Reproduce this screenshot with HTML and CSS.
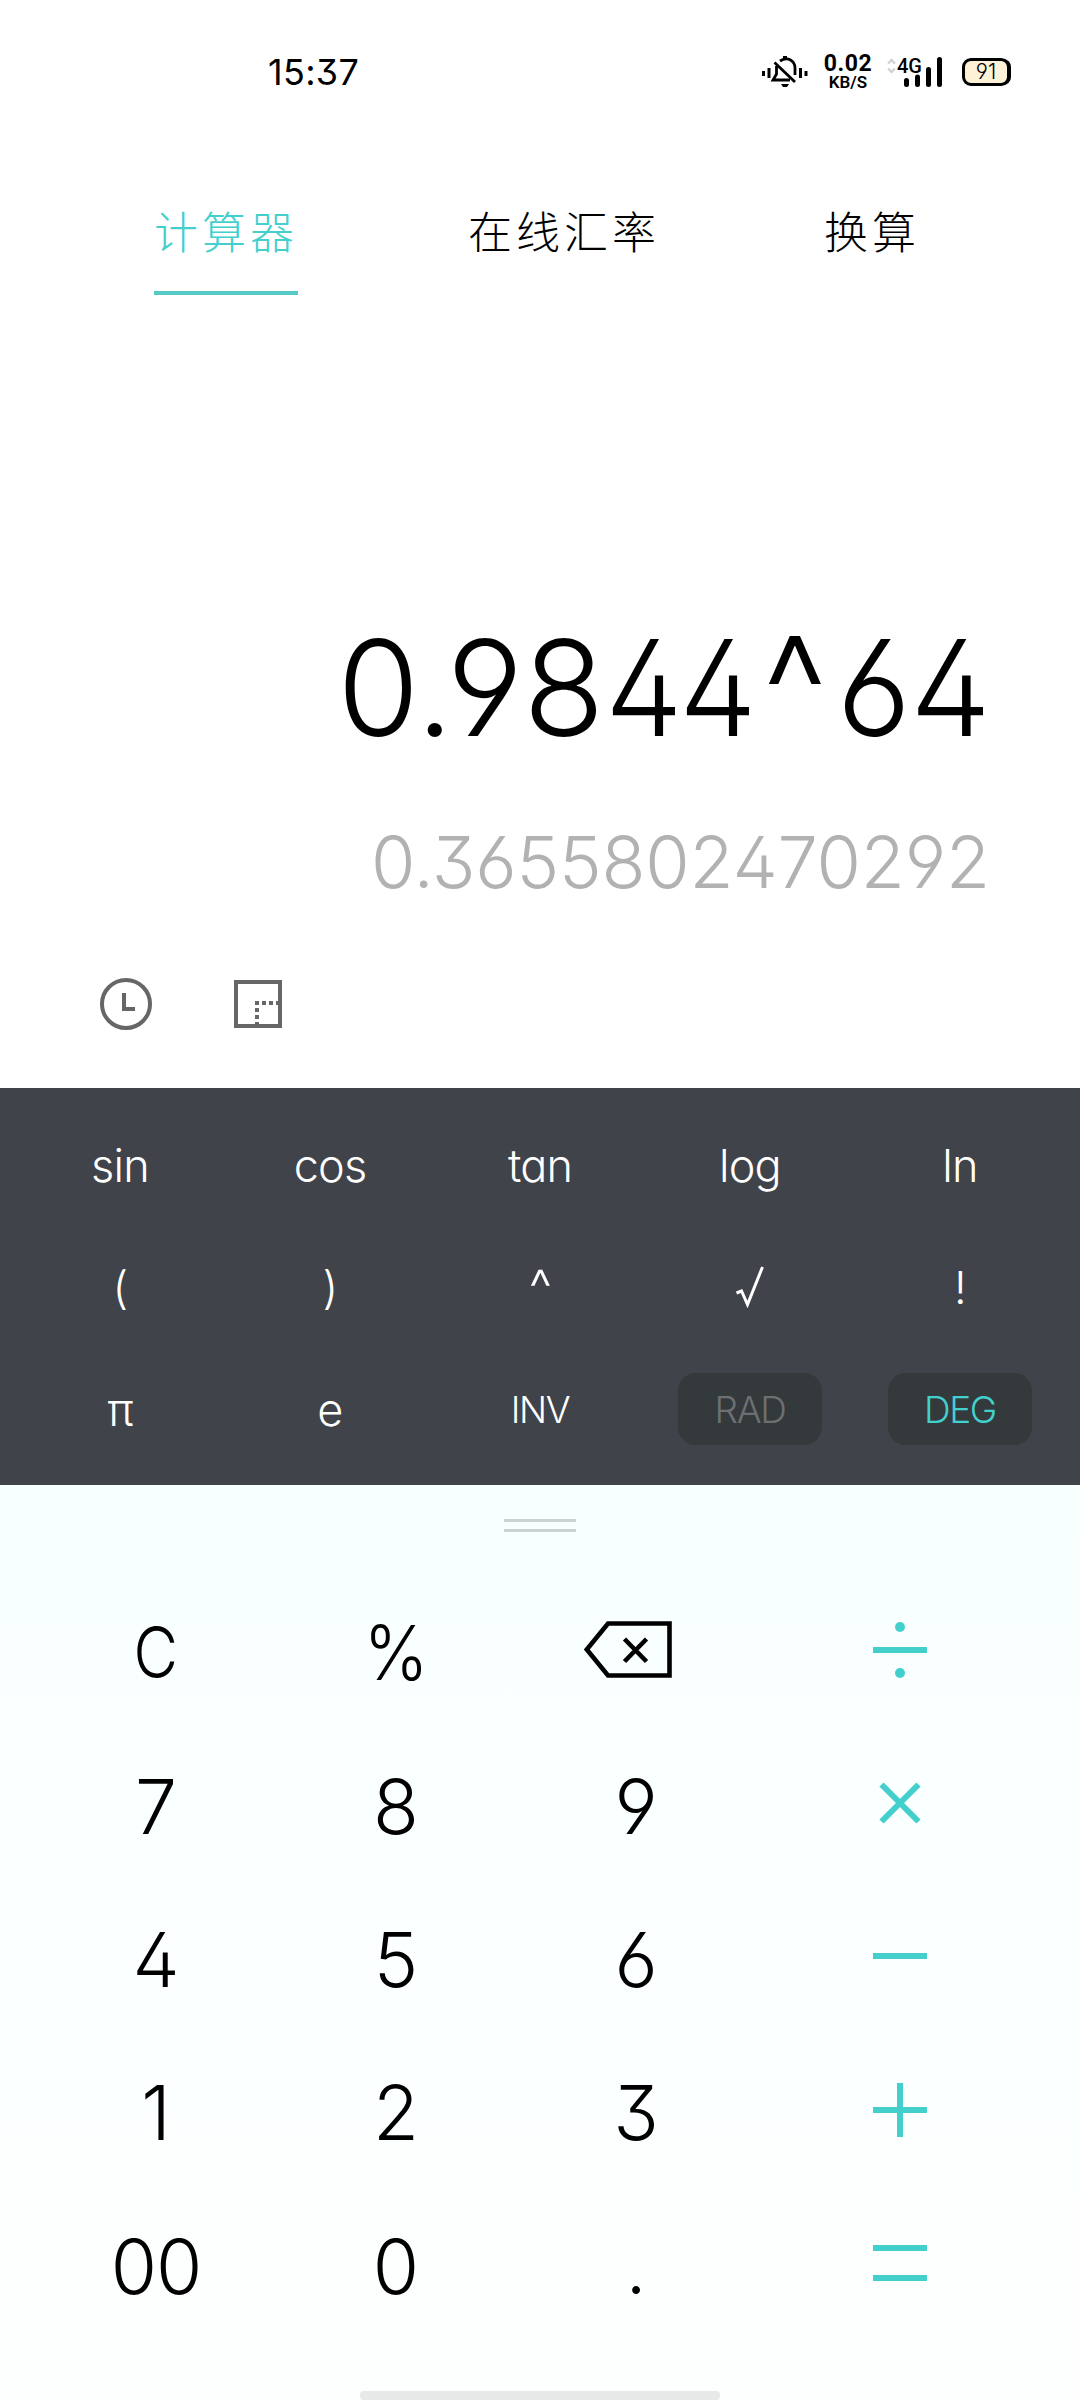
FILE: index.html
```html
<!DOCTYPE html>
<html lang="zh-CN">
<head>
<meta charset="utf-8">
<title>计算器</title>
<link rel="stylesheet" href="styles.css">
</head>
<body>
<div class="app">
  <header class="status">
    <span class="clock">15:37</span>
    <div class="status-icons">
      <svg class="mute" width="46" height="32" viewBox="0 0 46 32">
        <g fill="#000"><path d="M0 15h3v5H0zM5.500 12h3v10h-3zM37 12h3v10h-3zM42.500 15h3v5h-3zM19 28h8l-2 3h-4zM21 0h4v4h-4z"/></g>
        <g fill="none" stroke="#000" stroke-width="2.800"><path d="M18 5c8-5 15 0 15 7v7M14.500 10v8l-3.500 6h17M12.500 6.500L33 26"/></g>
      </svg>
      <div class="speed"><span class="rate">0.02</span><span class="unit">KB/S</span></div>
      <div class="signal">
        <svg class="arrows" width="9" height="18" viewBox="0 0 9 18"><path d="M1 6.500l3.500-3.500L8 6.500M1 11.500L4.500 15 8 11.500" fill="none" stroke="#d0d0d0" stroke-width="2.200"/></svg>
        <span class="net">4G</span>
        <svg class="bars" width="39" height="30" viewBox="0 0 39 30"><path d="M2.500 23.500v4M13.500 20v7.500M24.500 12.500v15M35.500 2.500v25" stroke="#000" stroke-width="5" stroke-linecap="round"/></svg>
      </div>
      <div class="battery">91</div>
    </div>
  </header>

  <nav class="tabs">
    <a class="tab active">计算器</a>
    <a class="tab">在线汇率</a>
    <a class="tab">换算</a>
  </nav>

  <section class="display">
    <div class="expression">0.98<span class="tight">44</span><span class="power">^</span><span class="last">64</span></div>
    <div class="result">0.3655802470292</div>
    <div class="tools">
      <svg width="52" height="52" viewBox="0 0 52 52" fill="none" stroke="#666" stroke-width="4"><circle cx="26" cy="26" r="24"/><path d="M24 15v16h11"/></svg>
      <svg width="48" height="48" viewBox="0 0 48 48" fill="none" stroke="#666" stroke-width="4"><path d="M2 2h44v44H2z"/><path d="M21 23h24" stroke-dasharray="4 3"/><path d="M23 28v18" stroke-dasharray="4 3"/></svg>
    </div>
  </section>

  <section class="functions">
    <span>sin</span><span>cos</span><span>tan</span><span>log</span><span>ln</span>
    <span>(</span><span>)</span><span class="caret">^</span>
    <span><svg width="28" height="42" viewBox="0 0 28 42"><path d="M.500 27l5-2 6 13.500L26.500 1" fill="none" stroke="#fff" stroke-width="3"/></svg></span>
    <span>!</span>
    <span>π</span><span>e</span><span class="small">INV</span>
    <span class="small"><b class="pill off">RAD</b></span><span class="small"><b class="pill">DEG</b></span>
  </section>

  <section class="keypad">
    <div class="handle"></div>
    <div class="keys">
      <span class="clear">C</span><span class="percent">%</span>
      <span class="op delete"><svg width="88" height="57" viewBox="0 0 88 57" fill="none" stroke="#000" stroke-width="4.600"><path d="M24 2.500h61.500v52H24L2.800 28.500z"/><path d="M40.500 18l22 22.500M62.500 18L40.500 40.500"/></svg></span>
      <span class="op"><svg width="54" height="58" viewBox="0 0 54 58" fill="#43d0cc"><path d="M0 26h54v6H0z"/><circle cx="27" cy="6" r="5"/><circle cx="27" cy="52" r="5"/></svg></span>
      <span>7</span><span>8</span><span>9</span>
      <span class="op"><svg width="42" height="42" viewBox="0 0 42 42"><path d="M2.500 2.500l37 37M39.500 2.500l-37 37" stroke="#43d0cc" stroke-width="6"/></svg></span>
      <span>4</span><span>5</span><span>6</span>
      <span class="op"><svg width="54" height="6" viewBox="0 0 54 6"><path d="M0 0h54v6H0z" fill="#43d0cc"/></svg></span>
      <span>1</span><span>2</span><span>3</span>
      <span class="op"><svg width="54" height="54" viewBox="0 0 54 54"><path d="M0 27h54M27 0v54" stroke="#43d0cc" stroke-width="6"/></svg></span>
      <span class="zeros">00</span><span>0</span><span>.</span>
      <span class="op"><svg width="54" height="36" viewBox="0 0 54 36"><path d="M0 3h54M0 33h54" stroke="#43d0cc" stroke-width="6"/></svg></span>
    </div>
    <div class="home"></div>
  </section>
</div>
</body>
</html>
```
FILE: styles.css
```css
* { box-sizing: border-box; }
body { margin: 0; background: #fff; }
svg { display: block; flex: none; }
.app {
  width: 1080px;
  height: 2400px;
  display: flex;
  flex-direction: column;
  overflow: hidden;
  color: #000;
  font-family: Inter, "Noto Sans CJK SC", sans-serif;
  font-feature-settings: "ss01", "cv03", "cv04", "cv09", "cv11";
  font-weight: 300;
}
.status {
  height: 144px;
  padding: 0 70px 0 268px;
  display: flex;
  align-items: center;
  justify-content: space-between;
}
.clock { font-size: 36px; font-weight: 400; letter-spacing: .3px; }
.status-icons { display: flex; align-items: center; }
.speed {
  display: flex;
  flex-direction: column;
  align-items: center;
  width: 52px;
  margin: 0 13px 0 14px;
  font-family: Roboto, sans-serif;
  font-weight: 700;
}
.rate { font-size: 23px; line-height: 21px; letter-spacing: .5px; }
.unit { font-size: 17px; line-height: 17px; font-weight: 600; }
.signal { display: flex; align-items: flex-start; width: 57px; }
.arrows { margin-right: 1px; }
.net { width: 7px; font: 500 20px/18px Roboto, sans-serif; white-space: nowrap; }
.battery {
  width: 48px;
  height: 28px;
  margin: 0 0 0 18px;
  border: 3px solid #000;
  border-radius: 9px;
  background: #fdf1d8;
  font-size: 21px;
  line-height: 22px;
  text-align: center;
  box-shadow: 2px 0 0 -1px #000;
}
.tabs { height: 151px; padding-left: 154px; display: flex; }
.tab {
  height: 151px;
  font: 300 44px/172px "Noto Sans CJK SC", sans-serif;
  letter-spacing: 4px;
}
.tab + .tab { margin-left: 170px; }
.tab + .tab + .tab { margin-left: 164px; }
.active { color: #43d0cc; border-bottom: 4px solid #55cac6; }
.display {
  height: 793px;
  padding: 305px 90px 0 98px;
  display: flex;
  flex-direction: column;
}
.expression { font-size: 133px; line-height: 176px; height: 176px; text-align: right; }
.expression span { display: inline-block; }
.tight { letter-spacing: -4px; transform: scaleX(.93); transform-origin: left; }
.power { font-size: 156px; line-height: 100px; vertical-align: -10px; margin: 0 2px 0 -4px; transform: scaleX(.92); }
.last { letter-spacing: -1px; transform: scaleX(.97); transform-origin: right; }
.result { margin-top: 16px; font-size: 72px; line-height: 140px; text-align: right; color: #b2b2b2; font-weight: 300; letter-spacing: -.2px; }
.tools { margin-top: 46px; display: flex; align-items: center; gap: 82px; padding-left: 2px; }
.functions {
  height: 397px;
  padding: 16px 15px 15px;
  display: grid;
  grid-template-columns: repeat(5, 1fr);
  grid-template-rows: repeat(3, 122px);
  place-items: center;
  background: #40434a;
  color: #fff;
  font-size: 45px;
  letter-spacing: -.8px;
}
.functions .caret { font-size: 52px; }
.functions .small { font-size: 37px; letter-spacing: -1.4px; }
.pill {
  display: block;
  width: 144px;
  height: 72px;
  border-radius: 18px;
  background: #34393c;
  color: #43d0cc;
  font-weight: 300;
  line-height: 73px;
  text-align: center;
}
.off { color: #6c7072; }
.keypad {
  height: 915px;
  display: flex;
  flex-direction: column;
  align-items: center;
  background: linear-gradient(#f8ffff, #fdffff 80%);
}
.handle {
  width: 72px;
  height: 13px;
  margin: 34px 0 41px;
  border: solid #ccd2d2;
  border-width: 3px 0;
}
.keys {
  height: 767px;
  width: 1008px;
  display: grid;
  grid-template-columns: 240px 240px 240px 288px;
  grid-template-rows: repeat(5, 153.4px);
  place-items: center;
  font-size: 75px;
}
.keys span { padding-top: 6px; }
.keys .op { padding-top: 0; }
.keys .delete { padding-right: 16px; }
.keys .clear { font-size: 71px; padding-top: 4px; transform: scaleX(.86); }
.keys .percent { padding-top: 5px; transform: scaleX(.92); }
.keys .zeros { letter-spacing: -1px; }
.home { width: 360px; height: 9px; margin-top: 51px; border-radius: 4px; background: #e7e9e9; }
```
